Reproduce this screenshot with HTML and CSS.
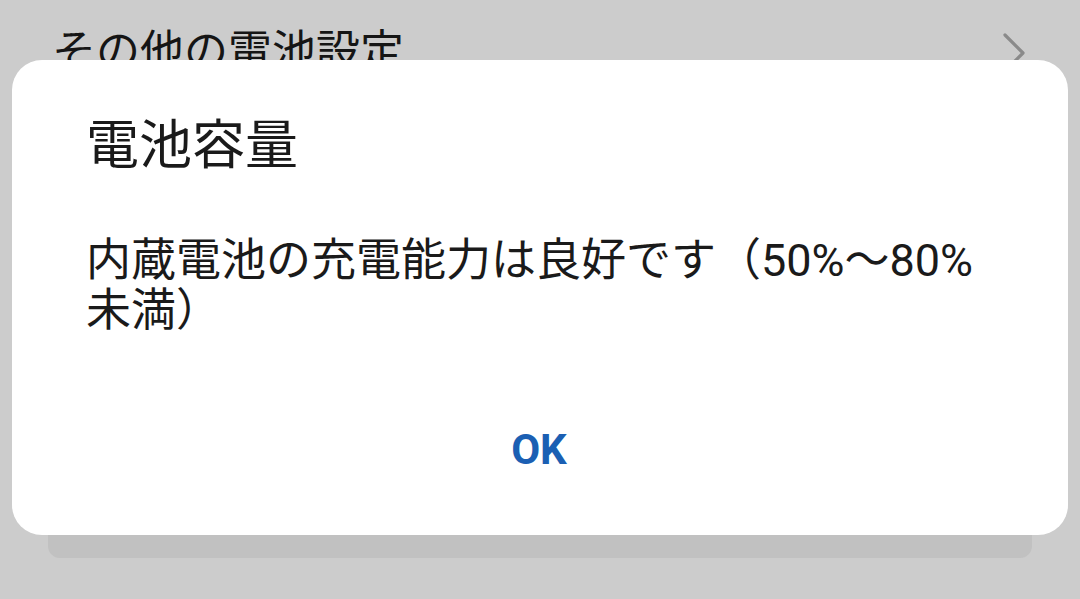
FILE: index.html
```html
<!DOCTYPE html>
<html lang="ja">
<head>
<meta charset="utf-8">
<link rel="stylesheet" href="styles.css">
</head>
<body>
<div class="page">
  <div class="row">
    <span class="row-label">その他の電池設定</span>
    <svg class="chevron" width="24" height="40" viewBox="0 0 24 40"><polyline points="3,3 21,21 3,39" fill="none" stroke="#8a8a8a" stroke-width="3.2" stroke-linecap="round" stroke-linejoin="round"/></svg>
  </div>
  <div class="card"></div>
</div>
<div class="dialog">
  <div class="dialog-title">電池容量</div>
  <div class="dialog-body">内蔵電池の充電能力は良好です（50%〜80%未満）</div>
  <div class="dialog-actions"><span class="ok">OK</span></div>
</div>
</body>
</html>
```
FILE: styles.css
```css
html, body {
  margin: 0;
  padding: 0;
}
body {
  width: 1080px;
  height: 599px;
  overflow: hidden;
  background: #cccccc;
  position: relative;
  font-family: Roboto, "Noto Sans CJK JP", sans-serif;
}
.page {
  display: flex;
  flex-direction: column;
}
.row {
  display: flex;
  align-items: flex-start;
  justify-content: space-between;
  padding: 22px 54px 0 52px;
  height: 120px;
  box-sizing: border-box;
}
.row-label {
  font-size: 44px;
  line-height: 60px;
  color: #151515;
}
.chevron {
  margin-top: 10px;
}
.card {
  margin: 0 48px;
  height: 438px;
  background: #c1c1c1;
  border-radius: 12px;
}
.dialog {
  position: absolute;
  left: 12px;
  top: 60px;
  width: 1056px;
  height: 475px;
  background: #ffffff;
  border-radius: 30px;
  box-sizing: border-box;
  padding: 54px 76px 0 74px;
  display: flex;
  flex-direction: column;
}
.dialog-title {
  font-size: 53px;
  line-height: 64px;
  color: #1a1a1a;
}
.dialog-body {
  margin-top: 58px;
  font-size: 45px;
  line-height: 50px;
  color: #1a1a1a;
}
.dialog-actions {
  margin-top: 89px;
  display: flex;
  justify-content: center;
}
.ok {
  font-size: 42px;
  line-height: 50px;
  font-weight: 700;
  color: #1b5fb3;
}
```
